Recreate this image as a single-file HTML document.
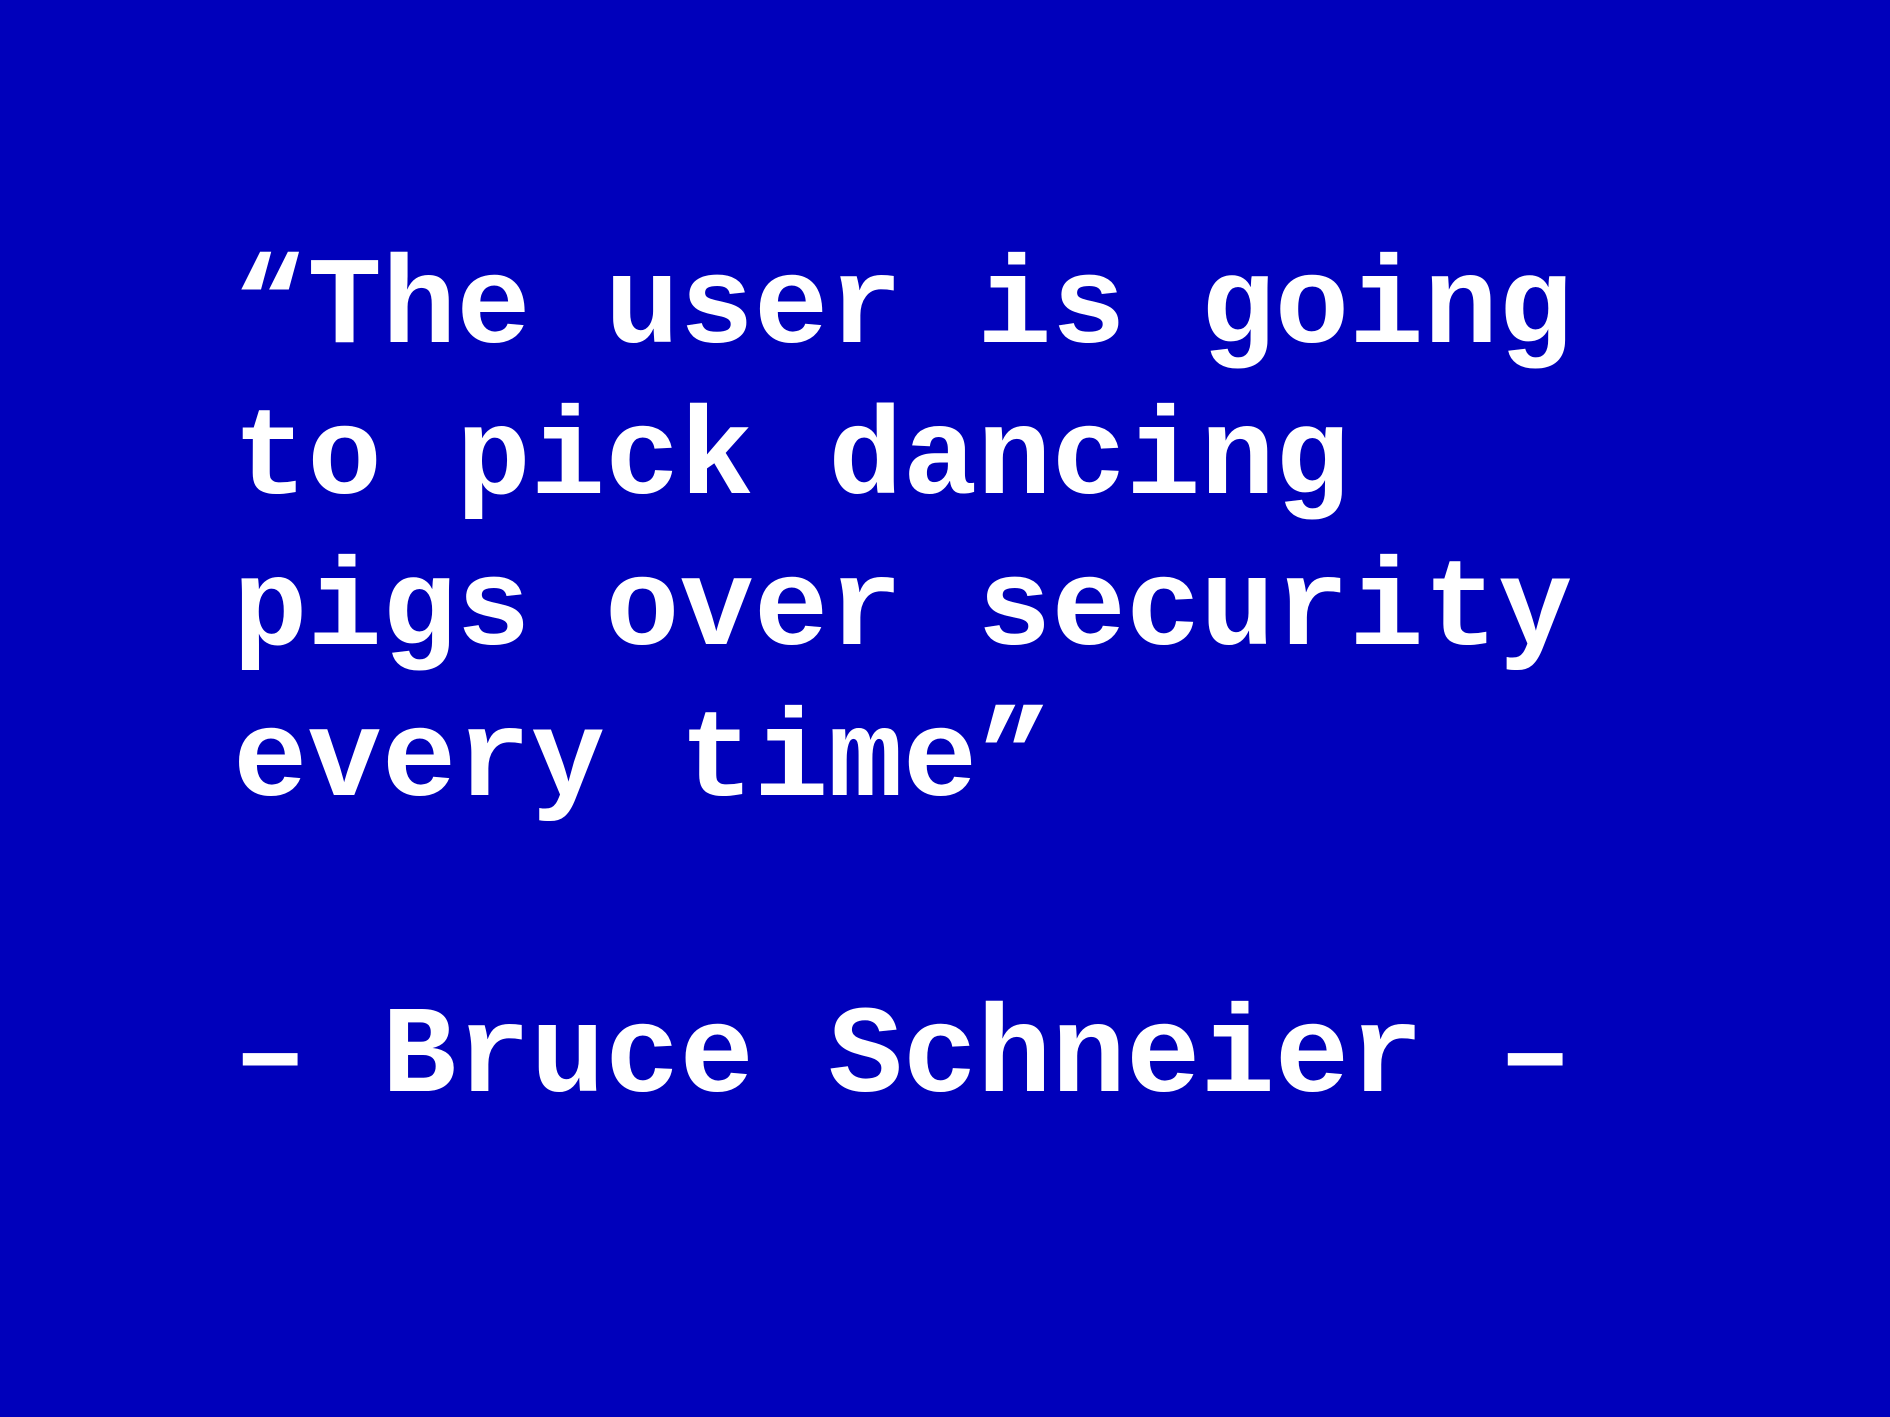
<!DOCTYPE html>
<html><head><meta charset="utf-8"><style>
html,body{margin:0;padding:0;}
body{width:1890px;height:1417px;background:#0000bb;overflow:hidden;position:relative;}
.t{position:absolute;left:233px;color:#fff;font-family:"Liberation Mono","Courier New",monospace;font-weight:bold;font-size:124px;line-height:151px;white-space:pre;}
</style></head><body>
<div class="t" style="top:235px">“The user is going
to pick dancing
pigs over security
every time”</div>
<div class="t" style="top:984px">– Bruce Schneier –</div>
</body></html>
